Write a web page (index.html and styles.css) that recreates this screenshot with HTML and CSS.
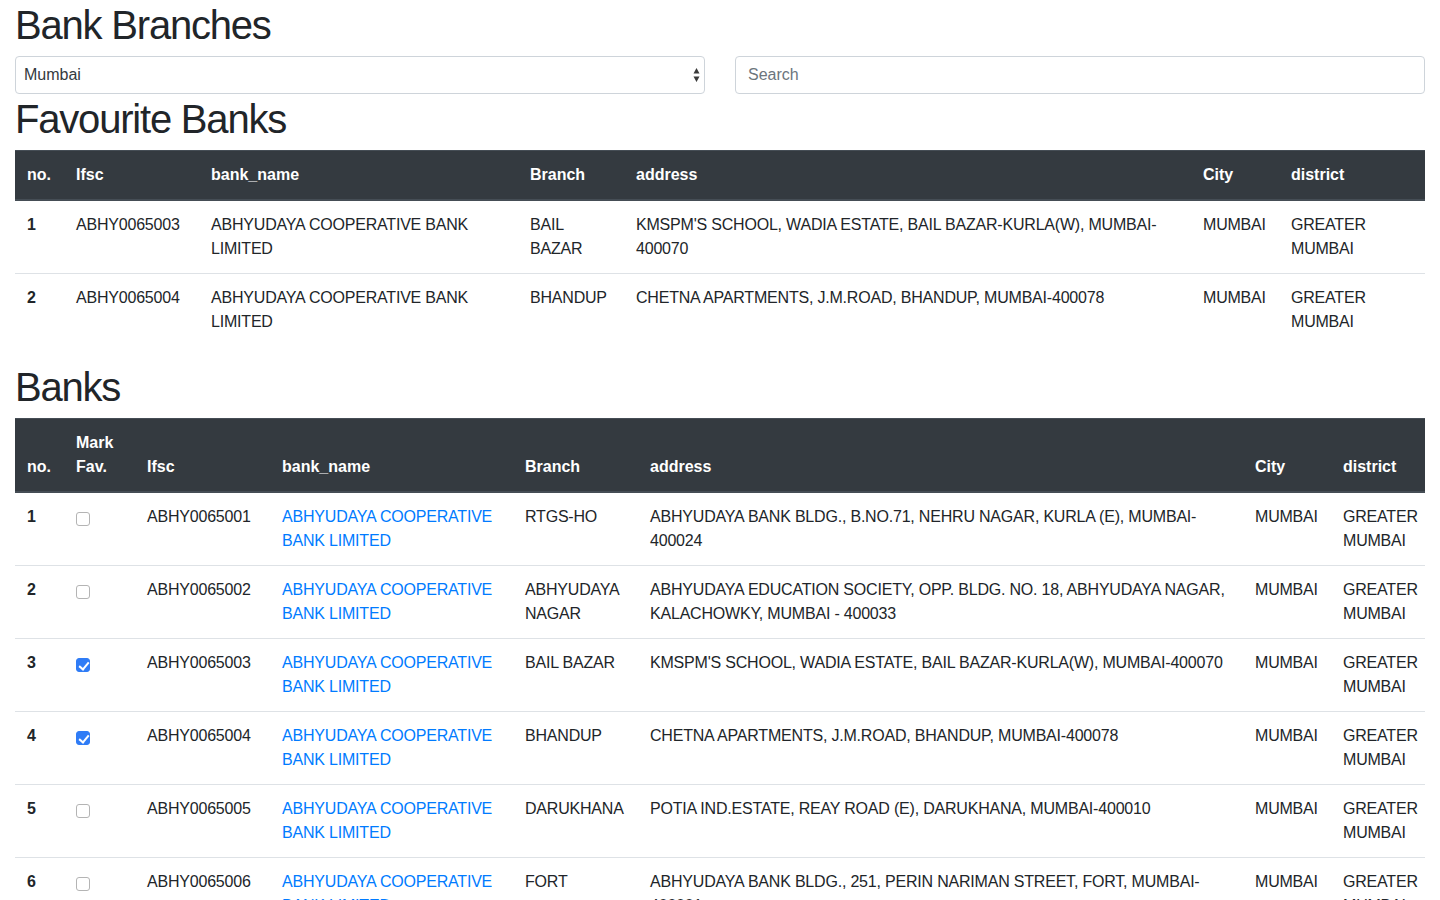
FILE: index.html
```html
<!DOCTYPE html>
<html lang="en">
<head>
<meta charset="utf-8">
<title>Bank Branches</title>
<link rel="stylesheet" href="styles.css">
</head>
<body>
<div class="container">
  <h1>Bank Branches</h1>
  <div class="row">
    <div class="col">
      <div class="select-wrap">
        <select class="form-control select">
          <option>Mumbai</option>
          <option>Delhi</option>
          <option>Bangalore</option>
        </select>
        <svg class="select-arrows" width="7" height="16" viewBox="0 0 7 16"><path d="M3.5 1 L6.5 6.5 L0.5 6.5 Z M3.5 15 L6.5 9.5 L0.5 9.5 Z" fill="#3a3a3a"/></svg>
      </div>
    </div>
    <div class="col">
      <input class="form-control" type="text" placeholder="Search">
    </div>
  </div>

  <h1>Favourite Banks</h1>
  <table class="table fav">
    <colgroup>
      <col class="w49"><col class="w135"><col class="w319"><col class="w106"><col class="w567"><col class="w88"><col class="w146">
    </colgroup>
    <thead>
      <tr><th>no.</th><th>Ifsc</th><th>bank_name</th><th>Branch</th><th>address</th><th>City</th><th>district</th></tr>
    </thead>
    <tbody>
      <tr><th>1</th><td>ABHY0065003</td><td>ABHYUDAYA COOPERATIVE BANK LIMITED</td><td>BAIL BAZAR</td><td>KMSPM'S SCHOOL, WADIA ESTATE, BAIL BAZAR-KURLA(W), MUMBAI-400070</td><td>MUMBAI</td><td>GREATER MUMBAI</td></tr>
      <tr><th>2</th><td>ABHY0065004</td><td>ABHYUDAYA COOPERATIVE BANK LIMITED</td><td>BHANDUP</td><td>CHETNA APARTMENTS, J.M.ROAD, BHANDUP, MUMBAI-400078</td><td>MUMBAI</td><td>GREATER MUMBAI</td></tr>
    </tbody>
  </table>

  <h1>Banks</h1>
  <table class="table banks">
    <colgroup>
      <col class="w49"><col class="w71"><col class="w135"><col class="w243"><col class="w125"><col class="w605"><col class="w88"><col class="w94">
    </colgroup>
    <thead>
      <tr><th>no.</th><th>Mark Fav.</th><th>Ifsc</th><th>bank_name</th><th>Branch</th><th>address</th><th>City</th><th>district</th></tr>
    </thead>
    <tbody>
      <tr><th>1</th><td><input type="checkbox" class="fav-check"></td><td>ABHY0065001</td><td><a href="#">ABHYUDAYA COOPERATIVE BANK LIMITED</a></td><td>RTGS-HO</td><td>ABHYUDAYA BANK BLDG., B.NO.71, NEHRU NAGAR, KURLA (E), MUMBAI-400024</td><td>MUMBAI</td><td>GREATER MUMBAI</td></tr>
      <tr><th>2</th><td><input type="checkbox" class="fav-check"></td><td>ABHY0065002</td><td><a href="#">ABHYUDAYA COOPERATIVE BANK LIMITED</a></td><td>ABHYUDAYA NAGAR</td><td>ABHYUDAYA EDUCATION SOCIETY, OPP. BLDG. NO. 18, ABHYUDAYA NAGAR, KALACHOWKY, MUMBAI - 400033</td><td>MUMBAI</td><td>GREATER MUMBAI</td></tr>
      <tr><th>3</th><td><input type="checkbox" class="fav-check" checked></td><td>ABHY0065003</td><td><a href="#">ABHYUDAYA COOPERATIVE BANK LIMITED</a></td><td>BAIL BAZAR</td><td>KMSPM'S SCHOOL, WADIA ESTATE, BAIL BAZAR-KURLA(W), MUMBAI-400070</td><td>MUMBAI</td><td>GREATER MUMBAI</td></tr>
      <tr><th>4</th><td><input type="checkbox" class="fav-check" checked></td><td>ABHY0065004</td><td><a href="#">ABHYUDAYA COOPERATIVE BANK LIMITED</a></td><td>BHANDUP</td><td>CHETNA APARTMENTS, J.M.ROAD, BHANDUP, MUMBAI-400078</td><td>MUMBAI</td><td>GREATER MUMBAI</td></tr>
      <tr><th>5</th><td><input type="checkbox" class="fav-check"></td><td>ABHY0065005</td><td><a href="#">ABHYUDAYA COOPERATIVE BANK LIMITED</a></td><td>DARUKHANA</td><td>POTIA IND.ESTATE, REAY ROAD (E), DARUKHANA, MUMBAI-400010</td><td>MUMBAI</td><td>GREATER MUMBAI</td></tr>
      <tr><th>6</th><td><input type="checkbox" class="fav-check"></td><td>ABHY0065006</td><td><a href="#">ABHYUDAYA COOPERATIVE BANK LIMITED</a></td><td>FORT</td><td>ABHYUDAYA BANK BLDG., 251, PERIN NARIMAN STREET, FORT, MUMBAI-400001</td><td>MUMBAI</td><td>GREATER MUMBAI</td></tr>
      <tr><th>7</th><td><input type="checkbox" class="fav-check"></td><td>ABHY0065007</td><td><a href="#">ABHYUDAYA COOPERATIVE BANK LIMITED</a></td><td>GHATKOPAR</td><td>UNIT NO 2 &amp; 3, SILVER HARMONY BLDG, NEW MANIKLAL ESTATE, GHATKOPAR (WEST), MUMBAI-400086</td><td>MUMBAI</td><td>GREATER MUMBAI</td></tr>
    </tbody>
  </table>
</div>
</body>
</html>
```

FILE: styles.css
```css
* { box-sizing: border-box; }
html, body { margin: 0; padding: 0; }
body {
  font-family: "Liberation Sans", Arial, sans-serif;
  font-size: 16px;
  line-height: 1.5;
  color: #212529;
  background: #fff;
}
.container { padding: 0 15px; }
h1 {
  margin: 0 0 7px;
  padding-top: 1px;
  font-size: 40px;
  font-weight: 500;
  line-height: 1.2;
  letter-spacing: -1.2px;
}
.row { display: flex; margin: 0 -15px; }
.col { flex: 1 1 0; padding: 0 15px; }
.form-control {
  display: block;
  width: 100%;
  height: 38px;
  padding: 6px 12px;
  font-family: inherit;
  font-size: 16px;
  line-height: 1.5;
  color: #495057;
  background: #fff;
  border: 1px solid #ced4da;
  border-radius: 4px;
  outline: none;
}
.form-control::placeholder { color: #6c757d; }
.select-wrap { position: relative; }
.select { appearance: none; -webkit-appearance: none; padding-left: 8px; color: #343a40; }
.select-arrows { position: absolute; right: 5px; top: 11px; pointer-events: none; }
.table {
  width: 100%;
  table-layout: fixed;
  border-collapse: collapse;
  margin-bottom: 16px;
}
.table th, .table td {
  padding: 12px;
  vertical-align: top;
  border-top: 1px solid #dee2e6;
  text-align: left;
}
.table td { letter-spacing: -0.2px; }
.table thead th {
  vertical-align: bottom;
  color: #fff;
  background: #343a40;
  border-top: 1px solid #454d55;
  border-bottom: 2px solid #454d55;
}
.table tbody th { font-weight: 700; }
.table a { color: #007bff; text-decoration: none; }
.w49 { width: 49px; } .w71 { width: 71px; } .w88 { width: 88px; } .w94 { width: 94px; }
.w106 { width: 106px; } .w125 { width: 125px; } .w135 { width: 135px; } .w146 { width: 146px; }
.w243 { width: 243px; } .w319 { width: 319px; } .w567 { width: 567px; } .w605 { width: 605px; }
.fav-check {
  appearance: none; -webkit-appearance: none;
  width: 14px; height: 14px; margin: 7px 0 0;
  border: 1px solid #b4b4b4; border-radius: 3px; background: #fff;
  display: block; position: relative;
}
.fav-check:checked { background: #2f7cf6; border-color: #2f7cf6; }
.fav-check:checked::after {
  content: ""; position: absolute; left: 4px; top: 1px;
  width: 4px; height: 8px; border: solid #fff; border-width: 0 2px 2px 0;
  transform: rotate(40deg);
}
```
